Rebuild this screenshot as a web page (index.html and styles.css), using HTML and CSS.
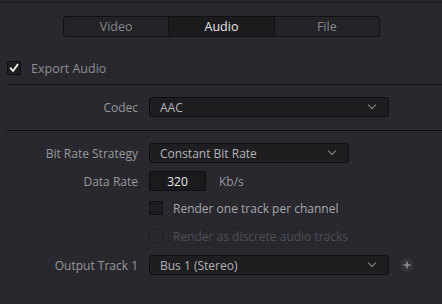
FILE: index.html
```html
<!DOCTYPE html>
<html lang="en">

<head>
    <meta charset="UTF-8">
    <title>Render Settings - Audio</title>
    <link rel="stylesheet" href="styles.css">
</head>

<body>
    <div class="topbar"></div>

    <div class="tabs">
        <div class="tab">Video</div>
        <div class="tab active">Audio</div>
        <div class="tab">File</div>
    </div>

    <label class="export">
        <span class="check checked">
            <svg width="10" height="10" viewBox="0 0 10 10"><path d="M1.5 5.2 L4 8 L8.6 1.6" fill="none" stroke="#f2f2f2" stroke-width="1.8" stroke-linejoin="round" stroke-linecap="round"/></svg>
        </span>
        Export Audio
    </label>

    <div class="divider"></div>

    <div class="row codec-row">
        <div class="label">Codec</div>
        <div class="select wide">AAC <span class="chev"></span></div>
    </div>

    <div class="divider second"></div>

    <div class="row strategy-row">
        <div class="label">Bit Rate Strategy</div>
        <div class="select medium">Constant Bit Rate <span class="chev"></span></div>
    </div>

    <div class="row rate-row">
        <div class="label">Data Rate</div>
        <div class="field">320</div>
        <div class="unit">Kb/s</div>
    </div>

    <div class="row option-row">
        <div class="label"></div>
        <label class="option"><span class="check"></span>Render one track per channel</label>
    </div>

    <div class="row option-row disabled">
        <div class="label"></div>
        <label class="option"><span class="check"></span>Render as discrete audio tracks</label>
    </div>

    <div class="row output-row">
        <div class="label">Output Track 1</div>
        <div class="select wide">Bus 1 (Stereo) <span class="chev"></span></div>
        <div class="add">
            <svg width="8" height="8" viewBox="0 0 8 8"><path d="M4 0.5 V7.5 M0.5 4 H7.5" stroke="#8c8c90" stroke-width="1.6"/></svg>
        </div>
    </div>
</body>

</html>
```

FILE: styles.css
```css
body {
    margin: 0;
    background-color: #28282e;
    font-family: "Open Sans", "Noto Sans", sans-serif;
    font-size: 12px;
    color: #a8a8ab;
    width: 442px;
    height: 304px;
    overflow: hidden;
}

.topbar {
    height: 2px;
    border-bottom: 1px solid #19191c;
}

.tabs {
    display: flex;
    width: 317px;
    height: 21px;
    margin: 13px 0 0 63px;
    border: 1px solid #111113;
    border-radius: 3px;
    box-sizing: border-box;
    background-color: #232327;
    overflow: hidden;
}

.tab {
    flex: 1;
    display: flex;
    align-items: center;
    justify-content: center;
    color: #88888b;
    font-size: 12.5px;
}

.tab + .tab {
    border-left: 1px solid #111113;
}

.tab.active {
    background-color: #1b1b1e;
    color: #e6e6e6;
}

.check {
    width: 14px;
    height: 14px;
    box-sizing: border-box;
    border: 1px solid #0f0f11;
    border-radius: 2px;
    background-color: #1e1e21;
    display: flex;
    align-items: center;
    justify-content: center;
    flex-shrink: 0;
}

.export {
    display: flex;
    align-items: center;
    gap: 10px;
    margin: 24px 0 0 7px;
    height: 14px;
    color: #8d8d91;
    font-size: 12.5px;
}

.divider {
    height: 1px;
    margin: 9px 0 0 7px;
    background-color: #0f0f11;
}

.divider.second {
    margin-top: 13px;
}

.row {
    display: flex;
    align-items: center;
    height: 20px;
}

.label {
    width: 138px;
    text-align: right;
    margin-right: 11px;
    flex-shrink: 0;
    color: #98989b;
}

.codec-row {
    margin-top: 12px;
}

.strategy-row {
    margin-top: 12px;
}

.rate-row {
    margin-top: 8px;
}

.select {
    height: 20px;
    box-sizing: border-box;
    border: 1px solid #0e0e10;
    border-radius: 3px;
    background-color: #1e1e21;
    display: flex;
    align-items: center;
    padding: 0 10px;
    color: #b4b4b7;
    position: relative;
}

.select.wide {
    width: 240px;
}

.select.medium {
    width: 200px;
}

.chev {
    position: absolute;
    right: 13px;
    top: 4px;
    width: 5px;
    height: 5px;
    border-right: 1.5px solid #8a8a8d;
    border-bottom: 1.5px solid #8a8a8d;
    transform: rotate(45deg);
}

.field {
    width: 57px;
    height: 20px;
    box-sizing: border-box;
    border: 1px solid #0e0e10;
    border-radius: 2px;
    background-color: #1a1a1d;
    color: #e8e8e8;
    display: flex;
    align-items: center;
    justify-content: center;
}

.unit {
    margin-left: 13px;
    color: #98989b;
}

.option-row {
    margin-top: 7px;
    height: 20px;
}

.option {
    display: flex;
    align-items: center;
    gap: 10px;
    color: #a6a6a9;
}

.option-row.disabled {
    margin-top: 8px;
}

.option-row.disabled .option {
    color: #4e4e53;
}

.option-row.disabled .check {
    background-color: transparent;
    border-color: #202024;
}

.output-row {
    margin-top: 9px;
}

.add {
    width: 14px;
    height: 14px;
    margin-left: 11px;
    border-radius: 50%;
    background-color: #323237;
    display: flex;
    align-items: center;
    justify-content: center;
}
```
